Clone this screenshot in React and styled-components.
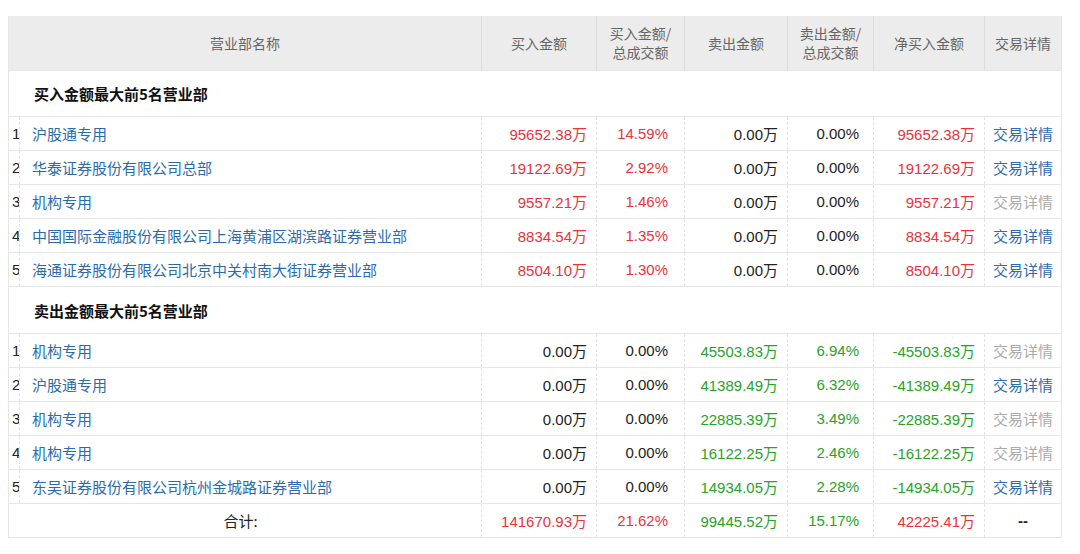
import React from 'react'
import styled, { createGlobalStyle } from 'styled-components'

const Global = createGlobalStyle`
  body { margin: 0; background: #fff; font-family: "Liberation Sans", "Noto Sans CJK SC", sans-serif; }
`

const Wrap = styled.div`
  padding: 16px 19px 0 8px;
`

const Table = styled.table`
  width: 100%;
  border-collapse: collapse;
  table-layout: fixed;
  font-size: 15px;
  border-left: 1px solid #e6e6e6;
  border-right: 1px solid #e6e6e6;
`

const Th = styled.th`
  background: #ececec;
  color: #666;
  font-weight: normal;
  font-size: 14px;
  line-height: 19px;
  height: 54px;
  padding: 0;
  font-family: "Noto Sans CJK SC", sans-serif;
  border-left: 1px solid #dedede;
  &:first-child { border-left: none; }
`

const Row = styled.tr`
  height: ${p => p.$h || 34}px;
  border-top: 1px solid #e6e6e6;
  border-bottom: 1px solid #e6e6e6;
`

const Td = styled.td`
  padding: 0 ${p => (p.$left ? 0 : 9)}px 0 ${p => (p.$left ? 3 : 0)}px;
  text-align: ${p => p.$align || 'right'};
  color: ${p => p.$color || '#222'};
  border-left: 1px dashed #e2e2e2;
  white-space: nowrap;
  overflow: hidden;
  &:first-child { border-left: none; }
`

const Section = styled.td`
  padding-left: 25px;
  font-weight: bold;
  color: #111;
  font-family: "Noto Sans CJK SC", sans-serif;
  font-size: 15px;
`

const Link = styled.span`
  color: ${p => (p.$muted ? '#aaa' : '#2a6cab')};
  font-family: "Noto Sans CJK SC", sans-serif;
`

const RED = '#e8333a'
const GREEN = '#27a327'

const buy = [
  ['沪股通专用', '95652.38万', '14.59%', '0.00万', '0.00%', '95652.38万', false],
  ['华泰证券股份有限公司总部', '19122.69万', '2.92%', '0.00万', '0.00%', '19122.69万', false],
  ['机构专用', '9557.21万', '1.46%', '0.00万', '0.00%', '9557.21万', true],
  ['中国国际金融股份有限公司上海黄浦区湖滨路证券营业部', '8834.54万', '1.35%', '0.00万', '0.00%', '8834.54万', false],
  ['海通证券股份有限公司北京中关村南大街证券营业部', '8504.10万', '1.30%', '0.00万', '0.00%', '8504.10万', false],
]

const sell = [
  ['机构专用', '0.00万', '0.00%', '45503.83万', '6.94%', '-45503.83万', true],
  ['沪股通专用', '0.00万', '0.00%', '41389.49万', '6.32%', '-41389.49万', false],
  ['机构专用', '0.00万', '0.00%', '22885.39万', '3.49%', '-22885.39万', true],
  ['机构专用', '0.00万', '0.00%', '16122.25万', '2.46%', '-16122.25万', true],
  ['东吴证券股份有限公司杭州金城路证券营业部', '0.00万', '0.00%', '14934.05万', '2.28%', '-14934.05万', false],
]

const DataRow = ({ i, r, side }) => {
  const bc = side === 'buy' ? RED : '#222'
  const sc = side === 'sell' ? GREEN : '#222'
  return (
    <Row>
      <Td $left $align="left">{i}</Td>
      <Td $align="left" style={{ paddingLeft: 12 }}><Link>{r[0]}</Link></Td>
      <Td $color={bc}>{r[1]}</Td>
      <Td $color={bc} style={{ paddingRight: 16 }}>{r[2]}</Td>
      <Td $color={sc}>{r[3]}</Td>
      <Td $color={sc} style={{ paddingRight: 14 }}>{r[4]}</Td>
      <Td $color={side === 'buy' ? RED : GREEN}>{r[5]}</Td>
      <Td $align="center" style={{ padding: 0 }}><Link $muted={r[6]}>交易详情</Link></Td>
    </Row>
  )
}

export default function App() {
  return (
    <Wrap>
      <Global />
      <Table>
        <colgroup>
          <col style={{ width: 11 }} />
          <col style={{ width: 462 }} />
          <col style={{ width: 115 }} />
          <col style={{ width: 88 }} />
          <col style={{ width: 103 }} />
          <col style={{ width: 86 }} />
          <col style={{ width: 111 }} />
          <col style={{ width: 77 }} />
        </colgroup>
        <thead>
          <tr>
            <Th colSpan={2}>营业部名称</Th>
            <Th>买入金额</Th>
            <Th>买入金额/<br />总成交额</Th>
            <Th>卖出金额</Th>
            <Th>卖出金额/<br />总成交额</Th>
            <Th>净买入金额</Th>
            <Th>交易详情</Th>
          </tr>
        </thead>
        <tbody>
          <Row $h={46}><Section colSpan={8}>买入金额最大前5名营业部</Section></Row>
          {buy.map((r, i) => <DataRow key={'b' + i} i={i + 1} r={r} side="buy" />)}
          <Row $h={47}><Section colSpan={8}>卖出金额最大前5名营业部</Section></Row>
          {sell.map((r, i) => <DataRow key={'s' + i} i={i + 1} r={r} side="sell" />)}
          <Row>
            <Td colSpan={2} $align="center" style={{ fontFamily: '"Noto Sans CJK SC", sans-serif' }}>合计:</Td>
            <Td $color={RED}>141670.93万</Td>
            <Td $color={RED} style={{ paddingRight: 16 }}>21.62%</Td>
            <Td $color={GREEN}>99445.52万</Td>
            <Td $color={GREEN} style={{ paddingRight: 14 }}>15.17%</Td>
            <Td $color={RED}>42225.41万</Td>
            <Td $align="center" style={{ padding: 0, fontWeight: 'bold' }}>--</Td>
          </Row>
        </tbody>
      </Table>
    </Wrap>
  )
}
